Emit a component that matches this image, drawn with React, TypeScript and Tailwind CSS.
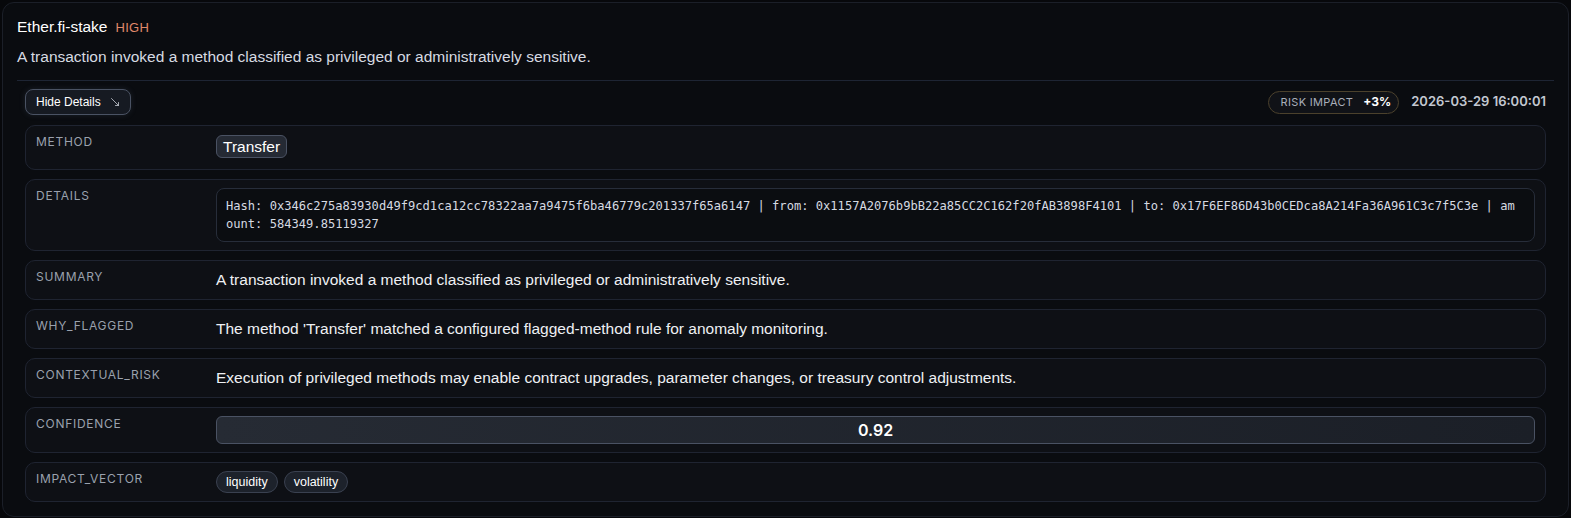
import React from 'react';
import { MoveDownRight } from 'lucide-react';

type Row = {
    label: string;
    kind: 'chip' | 'mono' | 'text' | 'bar' | 'tags';
    value: string | string[];
};

const ROWS: Row[] = [
    { label: 'METHOD', kind: 'chip', value: 'Transfer' },
    {
        label: 'DETAILS',
        kind: 'mono',
        value: 'Hash: 0x346c275a83930d49f9cd1ca12cc78322aa7a9475f6ba46779c201337f65a6147 | from: 0x1157A2076b9bB22a85CC2C162f20fAB3898F4101 | to: 0x17F6EF86D43b0CEDca8A214Fa36A961C3c7f5C3e | amount: 584349.85119327',
    },
    { label: 'SUMMARY', kind: 'text', value: 'A transaction invoked a method classified as privileged or administratively sensitive.' },
    { label: 'WHY_FLAGGED', kind: 'text', value: "The method 'Transfer' matched a configured flagged-method rule for anomaly monitoring." },
    { label: 'CONTEXTUAL_RISK', kind: 'text', value: 'Execution of privileged methods may enable contract upgrades, parameter changes, or treasury control adjustments.' },
    { label: 'CONFIDENCE', kind: 'bar', value: '0.92' },
    { label: 'IMPACT_VECTOR', kind: 'tags', value: ['liquidity', 'volatility'] },
];

const INTER = { fontFamily: 'Inter, "Noto Sans", sans-serif' };

const RowValue = ({ row }: { row: Row }) => {
    switch (row.kind) {
        case 'chip':
            return (
                <div className="pt-[1px] pb-[2px]">
                    <span className="inline-block rounded-md border border-[#4a5263] bg-[#252a34] px-[6px] text-[15.5px] leading-[21px] text-white">
                        {row.value}
                    </span>
                </div>
            );
        case 'mono':
            return (
                <div
                    className="rounded-lg border border-[#272d3a] bg-[#0b0d11] py-[8px] pl-[9px] pr-[12px] text-[12.1px] leading-[18px] text-[#d6dae2] break-all"
                    style={{ fontFamily: '"DejaVu Sans Mono", monospace' }}
                >
                    {row.value}
                </div>
            );
        case 'text':
            return <p className="text-[15.5px] leading-[22px] text-[#eef0f4]">{row.value}</p>;
        case 'bar':
            return (
                <div
                    className="flex h-[28px] items-center justify-center rounded-md border border-[#4a5263] bg-gradient-to-r from-[#262b34] to-[#1b1f27] text-[16px] font-semibold text-white"
                    style={INTER}
                >
                    {row.value}
                </div>
            );
        case 'tags':
            return (
                <div className="flex gap-[6px]">
                    {(row.value as string[]).map(tag => (
                        <span
                            key={tag}
                            className="rounded-full border border-[#3a4150] bg-[#1d222b] px-[9px] text-[12.5px] leading-[20px] text-white"
                        >
                            {tag}
                        </span>
                    ))}
                </div>
            );
    }
};

export default function App() {
    return (
        <div
            className="min-h-[518px] bg-[#07080b] p-[2px]"
            style={{ fontFamily: '"Liberation Sans", Arial, sans-serif' }}
        >
            <div className="rounded-xl border border-[#1b1f28] bg-[#0a0c10] px-[14px] pt-[13px] pb-[14px]">
                <div className="flex items-baseline gap-[8px]">
                    <h2 className="text-[15.5px] leading-[22px] text-white">Ether.fi-stake</h2>
                    <span className="text-[13px] tracking-wide text-[#e0896b]">HIGH</span>
                </div>
                <p className="mt-[8px] text-[15.5px] leading-[22px] text-[#d7dbe2]">
                    A transaction invoked a method classified as privileged or administratively sensitive.
                </p>
                <div className="mt-[12px] border-t border-[#1e2534]" />

                <div className="px-[8px] pt-[8px]">
                    <div className="flex items-center justify-between">
                        <button className="flex h-[26px] items-center gap-[8px] rounded-lg border border-[#4a5263] bg-[#161a22] pl-[10px] pr-[9px] text-[12px] text-white shadow-[0_0_6px_rgba(120,140,170,0.15)]">
                            Hide Details
                            <MoveDownRight size={12} strokeWidth={1.5} className="text-[#d0d4dc]" />
                        </button>
                        <div className="flex items-center gap-[12px]" style={INTER}>
                            <div className="flex h-[23px] items-center gap-[10px] rounded-full border border-[#4b412c] bg-[#101217] pl-[12px] pr-[7px]">
                                <span className="text-[11px] tracking-[0.03em] text-[#a9afba]">RISK IMPACT</span>
                                <span className="text-[12px] font-bold text-white">+3%</span>
                            </div>
                            <span className="text-[13px] font-semibold text-[#c3c8d1]">2026-03-29 16:00:01</span>
                        </div>
                    </div>

                    <div className="mt-[10px] flex flex-col gap-[9px]">
                        {ROWS.map(row => (
                            <div
                                key={row.label}
                                className="grid grid-cols-[180px_1fr] rounded-[10px] border border-[#1f2431] bg-[#0e1015] py-[8px] pl-[10px] pr-[10px]"
                            >
                                <div
                                    className="pt-[1px] text-[12px] leading-[14px] tracking-[0.06em] text-[#9aa1ad]"
                                    style={INTER}
                                >
                                    {row.label}
                                </div>
                                <div>
                                    <RowValue row={row} />
                                </div>
                            </div>
                        ))}
                    </div>
                </div>
            </div>
        </div>
    );
}
